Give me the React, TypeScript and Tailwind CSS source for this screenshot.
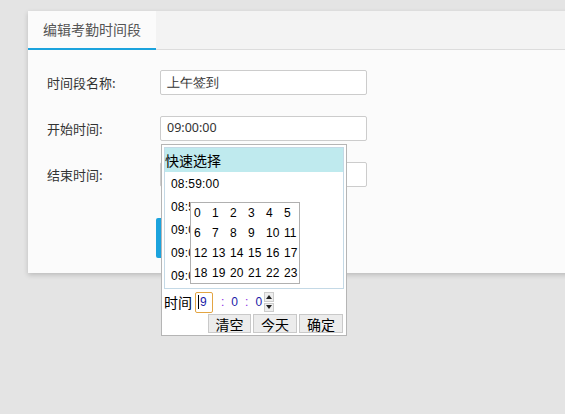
import React from "react";

const cjk = { fontFamily: '"Noto Sans CJK SC", "Noto Sans", sans-serif' };
const pop = { fontFamily: '"Liberation Sans", "Noto Sans CJK SC", sans-serif' };

function Row({ label, value, extra }: { label: string; value?: string; extra?: string }) {
  return (
    <div className="flex items-center h-[25px]">
      <div className="w-[113px] text-[13px] text-[#333]" style={cjk}>{label}</div>
      <div className={`w-[207px] h-[25px] bg-white border border-[#ccc] rounded-[2px] flex items-center pl-[6px] text-[#333] ${extra ?? ""}`}>
        {value}
      </div>
    </div>
  );
}

export default function App() {
  const hours = Array.from({ length: 24 }, (_, i) => i);
  const items = ["08:59:00", "08:59:00", "09:00:00", "09:00:00", "09:00:00"];
  return (
    <div className="relative w-[565px] h-[414px] overflow-hidden bg-[#e4e4e4] pt-[11px] pl-[28px]">
      <div className="w-[560px] h-[262px] bg-[#fbfbfb] shadow-[0_2px_5px_rgba(0,0,0,0.18)]">
        <div className="h-[39px] bg-[#f3f3f3] border-b border-[#dcdcdc] flex">
          <div
            className="w-[128px] h-[39px] -mb-px bg-[#fbfbfb] border-b-2 border-[#1ba3dd] flex items-center justify-center text-[14px] text-[#555]"
            style={cjk}
          >
            编辑考勤时间段
          </div>
        </div>
        <div className="pl-[19px] pt-[20px] flex flex-col gap-[21px]">
          <Row label="时间段名称:" value="上午签到" extra="text-[13px]" />
          <Row label="开始时间:" value="09:00:00" extra="text-[12.5px]" />
          <Row label="结束时间:" />
          <div className="mt-[10px] ml-[109px] w-[90px] h-[40px] bg-[#1ba3dd] rounded-[2px]" />
        </div>
      </div>

      {/* date picker popup */}
      <div
        className="absolute left-[161px] top-[144px] w-[186px] h-[192px] bg-white border border-[#b5b5b5] p-[2px] flex flex-col text-black"
        style={pop}
      >
        <div className="h-[142px] border border-[#c4d9e6] flex flex-col">
          <div className="h-[24px] bg-[#bfeaee] flex items-center text-[14px] leading-none pl-[0px]" style={cjk}>
            快速选择
          </div>
          {items.map((t, i) => (
            <div key={i} className="h-[23px] flex items-center pl-[6px] text-[12px] tracking-[0.2px]">
              {t}
            </div>
          ))}
        </div>
        <div className="flex items-center h-[22px] mt-[2px]">
          <div className="text-[14px] w-[31px] leading-none" style={cjk}>时间</div>
          <div className="w-[18px] h-[21px] border border-[#e3a543] rounded-[2px] flex items-center pl-[2px] text-[12px] text-[#1a1aa8]">
            <span className="w-px h-[14px] bg-black mr-px" />9
          </div>
          <span className="ml-[8px] text-[12px] text-[#8a2be2]">:</span>
          <span className="ml-[7px] text-[12px] text-[#1a1aa8]">0</span>
          <span className="ml-[7px] text-[12px] text-[#8a2be2]">:</span>
          <span className="ml-[7px] text-[12px] text-[#1a1aa8]">0</span>
          <div className="ml-[2px] w-[10px] h-[20px] flex flex-col gap-px">
            <div className="flex-1 bg-[#eee] border border-[#ccc] flex items-center justify-center">
              <svg width="6" height="4" viewBox="0 0 6 4"><path d="M3 0L6 4H0z" fill="#222" /></svg>
            </div>
            <div className="flex-1 bg-[#eee] border border-[#ccc] flex items-center justify-center">
              <svg width="6" height="4" viewBox="0 0 6 4"><path d="M0 0H6L3 4z" fill="#222" /></svg>
            </div>
          </div>
        </div>
        <div className="flex justify-end gap-[2px] mt-[1px] pr-[1px]">
          {["清空", "今天", "确定"].map((b, i) => (
            <div
              key={b}
              className={`${i === 0 ? "w-[43px]" : "w-[44px]"} h-[19px] bg-[#ececec] border border-[#c9c9c9] flex items-center justify-center text-[14px] leading-none`}
              style={cjk}
            >
              {b}
            </div>
          ))}
        </div>

        {/* hour selector overlay */}
        <div className="absolute left-[28px] top-[57px] w-[110px] h-[82px] bg-white border border-[#b0b0b0] pl-[3px] grid grid-cols-[18px_18px_18px_18px_18px_18px] auto-rows-[20px] text-[12px]">
          {hours.map((h) => (
            <div key={h} className="flex items-center">{h}</div>
          ))}
        </div>
      </div>
    </div>
  );
}
